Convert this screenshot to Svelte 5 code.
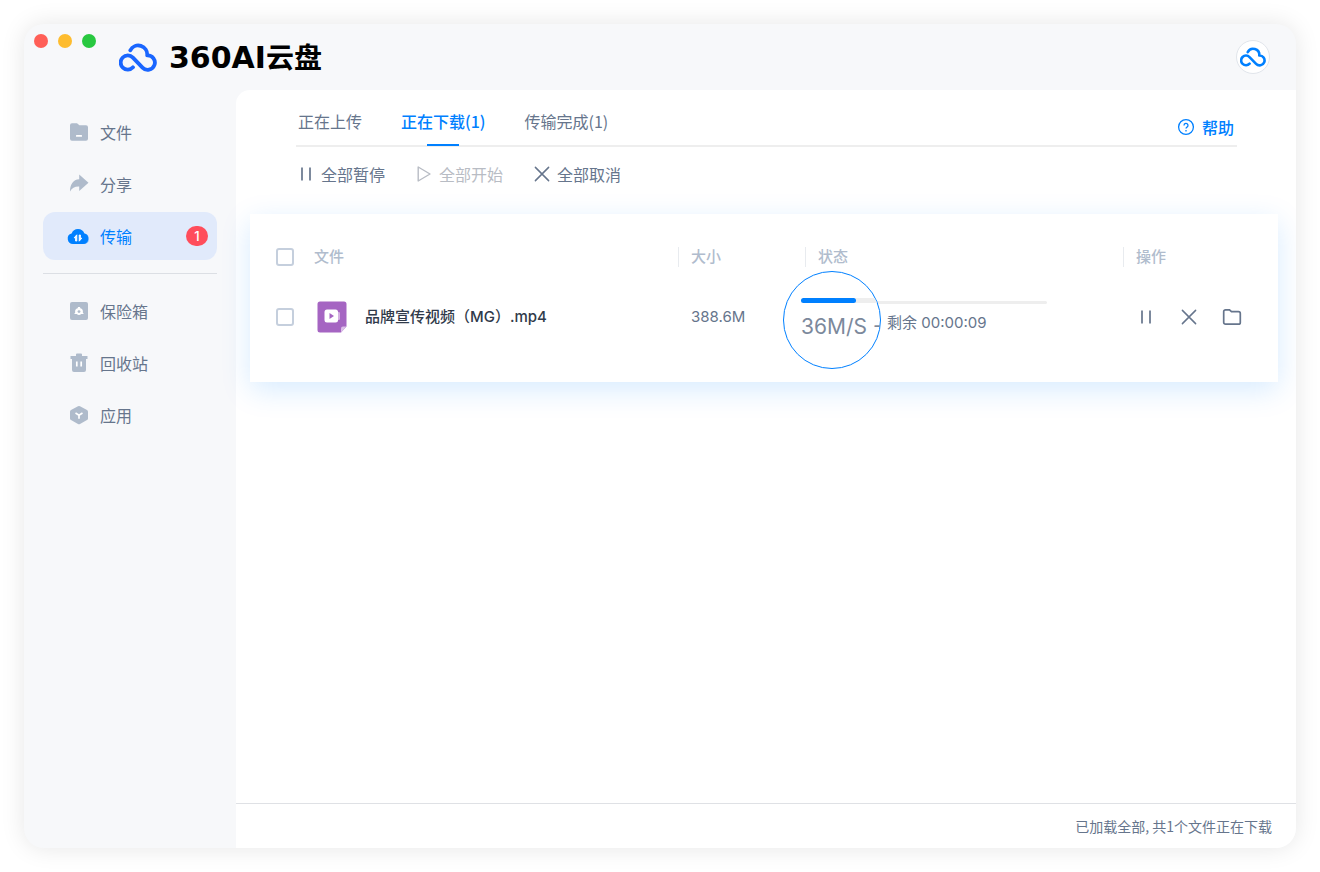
<script lang="ts">
	type NavItem = { id: string; label: string; badge?: number };

	const mainNav: NavItem[] = [
		{ id: 'files', label: '文件' },
		{ id: 'share', label: '分享' },
		{ id: 'transfer', label: '传输', badge: 1 }
	];
	const extraNav: NavItem[] = [
		{ id: 'safe', label: '保险箱' },
		{ id: 'trash', label: '回收站' },
		{ id: 'apps', label: '应用' }
	];
	const tabs = [
		{ id: 'upload', label: '正在上传' },
		{ id: 'download', label: '正在下载(1)' },
		{ id: 'done', label: '传输完成(1)' }
	];
	const files = [
		{
			name: '品牌宣传视频（MG）.mp4',
			size: '388.6M',
			speed: '36M/S',
			left: '00:00:09',
			progress: 24
		}
	];

	let activeNav = $state('transfer');
	let activeTab = $state('download');
	let selected: boolean[] = $state(files.map(() => false));
	const allSelected = $derived(selected.every(Boolean));

	function toggleAll() {
		const next = !allSelected;
		selected = selected.map(() => next);
	}
</script>

{#snippet cloud()}
	<svg class="cloud" viewBox="0 0 38 29" aria-hidden="true">
		<path
			d="M11.3 7.3A9 9 0 0 1 28.2 12.4A7.2 7.2 0 1 1 23.5 24.6L13.9 14.6A7.1 7.1 0 1 0 14 24.3"
			fill="none"
			stroke="currentColor"
			stroke-width="3.8"
			stroke-linecap="round"
			stroke-linejoin="round"
		/>
	</svg>
{/snippet}

{#snippet pauseIcon()}
	<svg width="18" height="18" viewBox="0 0 18 18" aria-hidden="true">
		<path d="M5 2.5v13M13 2.5v13" fill="none" stroke="currentColor" stroke-width="1.7" />
	</svg>
{/snippet}

{#snippet closeIcon()}
	<svg width="18" height="18" viewBox="0 0 18 18" aria-hidden="true">
		<path
			d="M2.4 2.4l13.2 13.2M15.6 2.4L2.4 15.6"
			fill="none"
			stroke="currentColor"
			stroke-width="1.5"
			stroke-linecap="round"
		/>
	</svg>
{/snippet}

{#snippet navButton(item: NavItem)}
	<button
		class="nav-item"
		class:active={activeNav === item.id}
		onclick={() => (activeNav = item.id)}
	>
		<svg width="24" height="24" viewBox="0 0 24 24" fill="currentColor" aria-hidden="true">
			{#if item.id === 'files'}
				<path
					d="M5 3.2h5l2.4 2H19a2 2 0 0 1 2 2v11.6a2 2 0 0 1-2 2H5a2 2 0 0 1-2-2V5.2a2 2 0 0 1 2-2z"
				/>
				<rect x="9" y="15" width="6" height="1.8" rx=".6" fill="#fff" />
			{:else if item.id === 'share'}
				<path
					d="M12.2 2.5L21.5 10.8L12.2 19V14.4C8 14.2 5 15.6 3 19.4C3 12.5 6 7.6 12.2 7.2Z"
				/>
			{:else if item.id === 'transfer'}
				<path d="M16 9.5a5.4 5.4 0 0 1 1.2 10.6h-2z" fill="#7fbdff" transform="translate(.8 0)" />
				<path
					d="M6.2 20A5.3 5.3 0 0 1 4.6 9.6A6.8 6.8 0 0 1 17.4 9.600A5.300 5.300 0 0 1 15.8 20z"
				/>
				<path
					d="M7.2 13.8l2.600-3v6.200H8.600v-3.200zM14.800 14.200l-2.600 3V11h1.200v3.200z"
					fill="#fff"
					stroke="#fff"
					stroke-width=".9"
				/>
			{:else if item.id === 'safe'}
				<rect x="3" y="3" width="18" height="18" rx="2" />
				<path
					d="M11 8h2l.3 1.2a3.600 3.600 0 0 1 2.500 4.200l1 1.600h-2.500a3.600 3.600 0 0 1-4.600 0H7.200l1-1.600a3.600 3.600 0 0 1 2.500-4.200z"
					fill="#fff"
				/>
				<circle cx="12" cy="12.6" r="1.4" />
			{:else if item.id === 'trash'}
				<path
					d="M10 2.5h4a1 1 0 0 1 1 1V5h5.500v3H19v11a2 2 0 0 1-2 2H7a2 2 0 0 1-2-2V8H3.500V5H9V3.500a1 1 0 0 1 1-1z"
				/>
				<path d="M9.8 10.5v5M14.200 10.500v5" stroke="#fff" stroke-width="1.7" />
			{:else}
				<path
					d="M11 3.2a2 2 0 0 1 2 0l7 3.900a2 2 0 0 1 1 1.700v6.600a2 2 0 0 1-1 1.700l-7 3.900a2 2 0 0 1-2 0l-7-3.900a2 2 0 0 1-1-1.700V8.800a2 2 0 0 1 1-1.700z"
				/>
				<path
					d="M8.500 10l3.500 2.200 3.500-2.200M12 12.200v3.600"
					fill="none"
					stroke="#fff"
					stroke-width="1.7"
				/>
			{/if}
		</svg>
		<span>{item.label}</span>
		{#if item.badge}
			<span class="badge">{item.badge}</span>
		{/if}
	</button>
{/snippet}

<div class="page">
	<div class="window">
		<header>
			<div class="lights">
				<button class="red" aria-label="关闭"></button>
				<button class="yellow" aria-label="最小化"></button>
				<button class="green" aria-label="全屏"></button>
			</div>
			<div class="logo">
				{@render cloud()}
				<div class="brand">360AI<span>云盘</span></div>
			</div>
			<button class="avatar" aria-label="账号">{@render cloud()}</button>
		</header>

		<div class="body">
			<nav>
				{#each mainNav as item}
					{@render navButton(item)}
				{/each}
				<hr />
				{#each extraNav as item}
					{@render navButton(item)}
				{/each}
			</nav>

			<main>
				<div class="tabs">
					{#each tabs as tab}
						<button
							class="tab"
							class:active={activeTab === tab.id}
							onclick={() => (activeTab = tab.id)}
						>
							{tab.label}
						</button>
					{/each}
					<a class="help" href="#help">
						<svg width="18" height="18" viewBox="0 0 18 18" fill="none" aria-hidden="true">
							<circle cx="9" cy="9" r="7.4" stroke="currentColor" stroke-width="1.3" />
							<path
								d="M7 7.4a2 2 0 1 1 3 1.7c-.7.4-1 .8-1 1.5M9 12v1.4"
								stroke="currentColor"
								stroke-width="1.3"
							/>
						</svg>
						帮助
					</a>
				</div>

				<div class="toolbar">
					<button>{@render pauseIcon()}全部暂停</button>
					<button disabled>
						<svg width="18" height="18" viewBox="0 0 18 18" aria-hidden="true">
							<path
								d="M3.2 2L15 9L3.2 16z"
								fill="none"
								stroke="currentColor"
								stroke-width="1.4"
								stroke-linejoin="round"
							/>
						</svg>
						全部开始
					</button>
					<button>{@render closeIcon()}全部取消</button>
				</div>

				<div class="card">
					<table>
						<thead>
							<tr>
								<th class="check">
									<input
										type="checkbox"
										aria-label="全选"
										checked={allSelected}
										onchange={toggleAll}
									/>
								</th>
								<th>文件</th>
								<th class="size"><span>大小</span></th>
								<th class="status"><span>状态</span></th>
								<th class="actions"><span>操作</span></th>
							</tr>
						</thead>
						<tbody>
							{#each files as file, i}
								<tr>
									<td class="check">
										<input type="checkbox" aria-label={file.name} bind:checked={selected[i]} />
									</td>
									<td>
										<div class="file">
											<svg width="30" height="32" viewBox="0 0 30 32" aria-hidden="true">
												<path
													d="M3 .5h24a2.500 2.500 0 0 1 2.500 2.500v22.500l-5.500 6H3A2.500 2.500 0 0 1 .5 29V3A2.500 2.500 0 0 1 3 .5z"
													fill="#a565c2"
												/>
												<path d="M29.500 25.500h-3.500a2 2 0 0 0-2 2v4z" fill="#dcc0e8" />
												<path d="M20 10.500l3 1v7l-3 1z" fill="#d3b0e2" />
												<rect x="7.5" y="8.5" width="13.5" height="13" rx="2.5" fill="#fff" />
												<path d="M12.500 12l4.500 3-4.500 3z" fill="#a565c2" />
											</svg>
											{file.name}
										</div>
									</td>
									<td class="size">{file.size}</td>
									<td class="status">
										<div class="transfer">
											<div class="track"></div>
											<div class="remain">剩余 {file.left}</div>
											<div class="lens">
												<div
													class="lens-track"
													role="progressbar"
													aria-label="下载进度"
													aria-valuenow={file.progress}
												>
													<div class="fill" style="width: {file.progress}%"></div>
												</div>
												<div class="speed">{file.speed} -</div>
											</div>
										</div>
									</td>
									<td class="actions">
										<div class="buttons">
											<button aria-label="暂停">{@render pauseIcon()}</button>
											<button aria-label="取消">{@render closeIcon()}</button>
											<button aria-label="打开文件夹">
												<svg width="20" height="18" viewBox="0 0 20 18" aria-hidden="true">
													<path
														d="M3.500 1.800h4l2 1.900h7a1.800 1.800 0 0 1 1.800 1.800v8.900a1.800 1.800 0 0 1-1.800 1.800h-13a1.800 1.800 0 0 1-1.800-1.800V3.600a1.800 1.800 0 0 1 1.800-1.800z"
														fill="none"
														stroke="currentColor"
														stroke-width="1.7"
													/>
												</svg>
											</button>
										</div>
									</td>
								</tr>
							{/each}
						</tbody>
					</table>
				</div>

				<footer>已加载全部, 共1个文件正在下载</footer>
			</main>
		</div>
	</div>
</div>

<style>
	:global(body) {
		margin: 0;
		background: #fff;
	}

	.page {
		display: flex;
		min-height: 100vh;
		padding: 24px;
		box-sizing: border-box;
		font-family: 'Noto Sans CJK SC', sans-serif;
		font-size: 16px;
		line-height: 24px;
		color: #66758c;
	}

	button {
		padding: 0;
		border: 0;
		background: none;
		font: inherit;
		color: inherit;
		cursor: pointer;
	}

	svg {
		display: block;
		flex: none;
	}

	.window {
		display: flex;
		flex-direction: column;
		flex: 1;
		overflow: hidden;
		border-radius: 20px;
		background: #f7f8fa;
		box-shadow: 0 0 24px rgba(0, 0, 0, 0.1);
	}

	header {
		display: flex;
		align-items: center;
		height: 66px;
		padding: 0 26px 0 10px;
	}

	.lights {
		display: flex;
		align-self: flex-start;
		gap: 10px;
		padding-top: 10px;
	}

	.lights button {
		width: 14px;
		height: 14px;
		border-radius: 50%;
	}

	.red {
		background: #ff5f57;
	}

	.yellow {
		background: #febc2e;
	}

	.green {
		background: #28c840;
	}

	.logo {
		display: flex;
		align-items: center;
		gap: 12px;
		margin-left: 23px;
		color: #1a66ff;
	}

	.cloud {
		width: 38px;
		height: 29px;
	}

	.brand {
		font-family: 'DejaVu Sans', 'Noto Sans CJK SC', sans-serif;
		font-size: 30px;
		font-weight: bold;
		line-height: 32px;
		color: #000;
	}

	.brand span {
		font-family: 'Noto Sans CJK SC', sans-serif;
		font-size: 28px;
	}

	.avatar {
		display: flex;
		align-items: center;
		justify-content: center;
		width: 34px;
		height: 34px;
		margin-left: auto;
		border: 1px solid #e1e5eb;
		border-radius: 50%;
		background: #fff;
		color: #0080ff;
	}

	.avatar .cloud {
		width: 26px;
		height: 20px;
	}

	.body {
		display: flex;
		flex: 1;
	}

	nav {
		display: flex;
		flex-direction: column;
		gap: 4px;
		width: 212px;
		padding: 18px 19px;
		box-sizing: border-box;
	}

	.nav-item {
		display: flex;
		align-items: center;
		gap: 9px;
		height: 48px;
		padding: 0 9px 0 24px;
		border-radius: 12px;
	}

	.nav-item svg {
		color: #afbbcb;
	}

	.nav-item.active {
		background: #e1eafb;
		color: #0080ff;
	}

	.nav-item.active svg {
		color: #0080ff;
	}

	.badge {
		margin-left: auto;
		width: 22px;
		border-radius: 10px;
		background: #ff4d5b;
		font-family: Inter, sans-serif;
		font-size: 13px;
		font-weight: 500;
		line-height: 20px;
		text-align: center;
		color: #fff;
	}

	hr {
		width: 100%;
		margin: 9px 0;
		border: 0;
		border-top: 1px solid #dcdfe4;
	}

	main {
		display: flex;
		flex-direction: column;
		flex: 1;
		min-width: 0;
		border-top-left-radius: 14px;
		background: #fff;
	}

	.tabs {
		display: flex;
		gap: 39px;
		height: 55px;
		margin: 0 59px 0 60px;
		padding-left: 2px;
		border-bottom: 2px solid #eee;
	}

	.tab {
		position: relative;
		padding-bottom: 8px;
		padding-top: 14px;
	}

	.tab.active {
		font-weight: 500;
		color: #0080ff;
	}

	.tab.active::after {
		content: '';
		position: absolute;
		left: 50%;
		bottom: -1px;
		width: 32px;
		height: 2px;
		margin-left: -16px;
		background: #0080ff;
	}

	.help {
		display: flex;
		align-items: center;
		gap: 7px;
		margin: 19px 3px 0 auto;
		height: 36px;
		font-weight: 500;
		color: #0080ff;
		text-decoration: none;
	}

	.toolbar {
		display: flex;
		gap: 30px;
		padding: 15px 61px 28px;
	}

	.toolbar button {
		display: flex;
		align-items: center;
		gap: 6px;
	}

	.toolbar button:disabled {
		color: #b8bcc4;
		cursor: default;
	}

	.card {
		margin: 0 18px 0 14px;
		padding: 13px 0 35px;
		background: #fff;
		box-shadow: 0 8px 28px rgba(0, 128, 255, 0.16);
	}

	table {
		width: 100%;
		table-layout: fixed;
		border-collapse: collapse;
		font-family: Inter, 'Noto Sans CJK SC', sans-serif;
		font-size: 15px;
		line-height: 20px;
	}

	tr {
		height: 60px;
	}

	th,
	td {
		padding: 0;
		text-align: left;
		vertical-align: middle;
	}

	th {
		font-weight: 500;
		color: #b0bccd;
	}

	th span {
		display: block;
		padding-left: 12px;
		border-left: 1px solid #e8ebef;
	}

	.check {
		width: 64px;
	}

	.size {
		width: 127px;
	}

	.status {
		width: 318px;
	}

	.actions {
		width: 155px;
	}

	td.size,
	td.status,
	td.actions {
		padding-left: 13px;
		box-sizing: border-box;
	}

	input[type='checkbox'] {
		display: block;
		appearance: none;
		width: 18px;
		height: 18px;
		margin: 0 0 0 26px;
		border: 2px solid #c5cfdd;
		border-radius: 3px;
		background: #fff;
	}

	input[type='checkbox']:checked {
		border-color: #0080ff;
		background: #0080ff;
	}

	.file {
		display: flex;
		align-items: center;
		gap: 18px;
		padding-left: 3px;
		font-weight: 500;
		color: #303a4a;
	}

	.transfer {
		position: relative;
		width: 229px;
	}

	.track {
		height: 3px;
		border-radius: 2px;
		background: #eee;
	}

	.remain {
		margin-top: 9px;
		padding-left: 69px;
	}

	/* magnifier over the start of the progress line */
	.lens {
		position: absolute;
		top: -30px;
		left: -35px;
		width: 98px;
		height: 98px;
		padding: 26px 0 0 17px;
		box-sizing: border-box;
		overflow: hidden;
		border: 1px solid #0080ff;
		border-radius: 50%;
		background: #fff;
	}

	.lens-track {
		width: 229px;
		height: 5px;
		border-radius: 3px;
		background: #eee;
	}

	.fill {
		height: 100%;
		border-radius: 3px;
		background: #0080ff;
	}

	.speed {
		margin-top: 11px;
		font-size: 21px;
		line-height: 26px;
		white-space: nowrap;
		color: #7c899c;
	}

	.buttons {
		display: flex;
		gap: 23px;
	}

	.buttons button {
		display: flex;
		align-items: center;
		justify-content: center;
		width: 20px;
		height: 20px;
	}

	footer {
		margin-top: auto;
		padding: 10px 24px;
		border-top: 1px solid #dfe1e5;
		font-size: 14px;
		text-align: right;
	}
</style>
